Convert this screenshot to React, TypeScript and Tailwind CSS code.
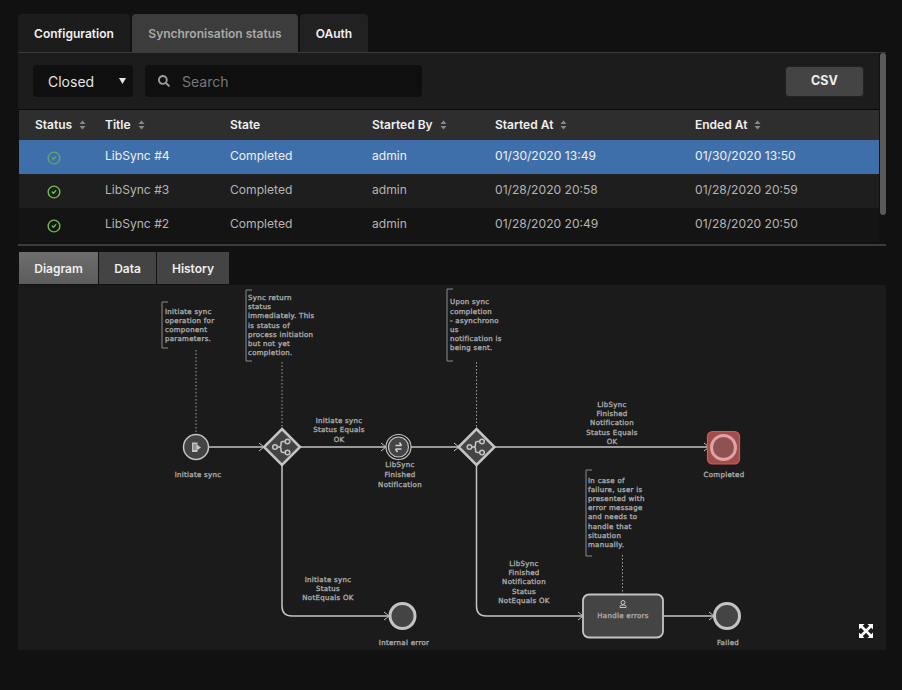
import { CircleCheck } from 'lucide-react';
import { FaSearch } from 'react-icons/fa';

const columns = ['Status', 'Title', 'State', 'Started By', 'Started At', 'Ended At'];
const sortable = [true, true, false, true, true, true];

const rows = [
  { title: 'LibSync #4', started: '01/30/2020 13:49', ended: '01/30/2020 13:50' },
  { title: 'LibSync #3', started: '01/28/2020 20:58', ended: '01/28/2020 20:59' },
  { title: 'LibSync #2', started: '01/28/2020 20:49', ended: '01/28/2020 20:50' },
];

const SortIcon = () => (
  <svg width="7" height="10" viewBox="0 0 7 10" className="fill-[#8a8a8a]">
    <path d="M3.5 0.5 L6.5 4 H0.5 Z M3.5 9.5 L0.5 6 H6.5 Z" />
  </svg>
);

// multi-line diagram text, anchor is start for notes and middle for labels
const DiagramText = ({ x, ys, lines, middle }: { x: number; ys: number[]; lines: string[]; middle?: boolean }) => (
  <g textAnchor={middle ? 'middle' : 'start'} stroke="#a8a8a8" strokeWidth="0.35">
    {lines.map((line, i) => (
      <text key={i} x={x} y={ys[i]}>
        {line}
      </text>
    ))}
  </g>
);

const Bracket = ({ x, y1, y2 }: { x: number; y1: number; y2: number }) => (
  <path d={`M${x + 6} ${y1} H${x} V${y2} H${x + 6}`} fill="none" stroke="#8c8c8c" strokeWidth="1" />
);

const Arrow = ({ x, y }: { x: number; y: number }) => (
  <path d={`M${x - 5} ${y - 4} L${x} ${y} L${x - 5} ${y + 4}`} fill="none" stroke="#c4c4c4" strokeWidth="1" />
);

const Gateway = ({ cx, cy }: { cx: number; cy: number }) => (
  <g>
    <path
      d={`M${cx} ${cy - 18} L${cx + 18} ${cy} L${cx} ${cy + 18} L${cx - 18} ${cy} Z`}
      fill="#444444"
      stroke="#c4c4c4"
      strokeWidth="2.5"
    />
    <g fill="none" stroke="#c4c4c4" strokeWidth="1.5">
      <circle cx={cx - 7} cy={cy} r="2.3" />
      <circle cx={cx + 5.5} cy={cy - 5.5} r="2.3" />
      <circle cx={cx + 5.5} cy={cy + 5.5} r="2.3" />
      <path d={`M${cx - 4.7} ${cy} H${cx - 3} Q${cx - 1} ${cy} ${cx - 1} ${cy - 2} V${cy - 3.5} Q${cx - 1} ${cy - 5.5} ${cx + 1} ${cy - 5.5} H${cx + 3.2}`} />
      <path d={`M${cx - 3} ${cy} Q${cx - 1} ${cy} ${cx - 1} ${cy + 2} V${cy + 3.5} Q${cx - 1} ${cy + 5.5} ${cx + 1} ${cy + 5.5} H${cx + 3.2}`} />
    </g>
  </g>
);

const Diagram = () => (
  <svg
    viewBox="18 285 868 365"
    width="868"
    height="365"
    className="block font-['DejaVu_Sans',sans-serif] text-[7px] tracking-[0.3px] fill-[#a8a8a8]"
  >
    {/* notes */}
    <Bracket x={162} y1={302} y2={348} />
    <DiagramText x={165} ys={[314, 323, 332, 341]} lines={['Initiate sync', 'operation for', 'component', 'parameters.']} />
    <Bracket x={246} y1={290} y2={361} />
    <DiagramText
      x={248}
      ys={[300, 309, 318, 328, 337, 346, 355]}
      lines={['Sync return', 'status', 'immediately. This', 'is status of', 'process initiation', 'but not yet', 'completion.']}
    />
    <Bracket x={447} y1={289} y2={361} />
    <DiagramText
      x={450}
      ys={[304, 314, 323, 332, 341, 350]}
      lines={['Upon sync', 'completion', '- asynchrono', 'us', 'notification is', 'being sent.']}
    />
    <Bracket x={586} y1={470} y2={556} />
    <DiagramText
      x={588}
      ys={[483, 492, 501, 510, 519, 529, 538, 547]}
      lines={['In case of', 'failure, user is', 'presented with', 'error message', 'and needs to', 'handle that', 'situation', 'manually.']}
    />

    {/* associations */}
    <g stroke="#a0a0a0" strokeWidth="1" strokeDasharray="1.5 2" fill="none">
      <path d="M196 350 V434" />
      <path d="M282 362 V428" />
      <path d="M476.5 362 V428" />
      <path d="M622.5 555 V594" />
    </g>

    {/* flows */}
    <g stroke="#c4c4c4" strokeWidth="1.5" fill="none">
      <path d="M208 447 H263" />
      <path d="M300 447 H385" />
      <path d="M411 447 H458" />
      <path d="M494 447 H708" />
      <path d="M282 465 V606 Q282 616 292 616 H388" />
      <path d="M476.5 465 V606 Q476.5 616 486 616 H582" />
      <path d="M663 616 H713" />
    </g>
    <Arrow x={264} y={447} />
    <Arrow x={386} y={447} />
    <Arrow x={459} y={447} />
    <Arrow x={709} y={447} />
    <Arrow x={389} y={616} />
    <Arrow x={583} y={616} />
    <Arrow x={714} y={616} />

    {/* start */}
    <circle cx="196" cy="447" r="12.5" fill="#444444" stroke="#c4c4c4" strokeWidth="1.5" />
    <path d="M192 442.5 H197.5 V445 L201 447.5 L197.5 450 V452 H192 Z" fill="#c4c4c4" />
    <path d="M193.2 445 H196.5 M193.2 447 H196.5 M193.2 449 H196.5" stroke="#444444" strokeWidth="0.8" />

    <Gateway cx={282} cy={447} />
    <Gateway cx={476.5} cy={447} />

    {/* intermediate */}
    <circle cx="398.5" cy="447" r="12.5" fill="#1b1b1b" stroke="#c4c4c4" strokeWidth="1.2" />
    <circle cx="398.5" cy="447" r="10" fill="#444444" stroke="#c4c4c4" strokeWidth="1.2" />
    <path d="M395.5 445.5 H401.5 M399.5 442.5 L401.5 445.5 M401.5 449 H395.5 M397.5 452 L395.5 449" stroke="#d0d0d0" strokeWidth="1.5" fill="none" />

    {/* completed */}
    <rect x="707.5" y="431.5" width="32" height="32.5" rx="5" fill="#a24c4c" stroke="#d4585a" strokeWidth="1.2" />
    <circle cx="723.5" cy="447.5" r="12" fill="#8e5252" stroke="#dfa3a3" strokeWidth="3" />

    {/* task */}
    <rect x="583" y="594.5" width="80" height="43" rx="6" fill="#444444" stroke="#c4c4c4" strokeWidth="1.8" />
    <circle cx="623" cy="602.5" r="2" fill="none" stroke="#c4c4c4" strokeWidth="1" />
    <path d="M620 607.5 V606.5 Q620 605 622 605 H624 Q626 605 626 606.5 V607.5 Z" fill="none" stroke="#c4c4c4" strokeWidth="1" />

    {/* end events */}
    <circle cx="402.5" cy="616" r="12.5" fill="#444444" stroke="#c4c4c4" strokeWidth="3" />
    <circle cx="727" cy="616" r="12.5" fill="#444444" stroke="#c4c4c4" strokeWidth="3" />

    {/* labels */}
    <DiagramText middle x={198} ys={[477]} lines={['Initiate sync']} />
    <DiagramText middle x={339} ys={[423, 432, 442]} lines={['Initiate sync', 'Status Equals', 'OK']} />
    <DiagramText middle x={400} ys={[467, 477, 487]} lines={['LibSync', 'Finished', 'Notification']} />
    <DiagramText
      middle
      x={612}
      ys={[407, 416, 425, 435, 444]}
      lines={['LibSync', 'Finished', 'Notification', 'Status Equals', 'OK']}
    />
    <DiagramText middle x={724} ys={[477]} lines={['Completed']} />
    <DiagramText middle x={328} ys={[582, 591, 600]} lines={['Initiate sync', 'Status', 'NotEquals OK']} />
    <DiagramText middle x={524} ys={[566, 575, 584, 594, 603]} lines={['LibSync', 'Finished', 'Notification', 'Status', 'NotEquals OK']} />
    <DiagramText middle x={404} ys={[645]} lines={['Internal error']} />
    <DiagramText middle x={623} ys={[618]} lines={['Handle errors']} />
    <DiagramText middle x={728} ys={[645]} lines={['Failed']} />
  </svg>
);

const ExpandIcon = () => (
  <svg width="14" height="14" viewBox="0 0 14 14" className="absolute bottom-[12px] right-[13px] fill-white stroke-white">
    <path d="M0 0 H5.5 L0 5.5 Z M14 0 V5.5 L8.5 0 Z M14 14 H8.5 L14 8.5 Z M0 14 V8.5 L5.5 14 Z" strokeWidth="0" />
    <path d="M2 2 L12 12 M12 2 L2 12" strokeWidth="2.6" />
  </svg>
);

export default function App() {
  return (
    <div className="min-h-[690px] bg-[#111111] pl-[18px] pr-4 pt-[14px] font-['Inter',sans-serif]">
      {/* Top tabs */}
      <div className="flex h-[38px] gap-[2px] text-[12px] font-semibold">
        <div className="flex w-[112px] items-center justify-center rounded-t bg-[#1c1c1c] pt-px text-[#f0f0f0]">Configuration</div>
        <div className="flex w-[166px] items-center justify-center rounded-t bg-[#3c3c3c] pt-px text-[#a9a9a9]">Synchronisation status</div>
        <div className="flex w-[68px] items-center justify-center rounded-t bg-[#212121] pt-px text-[#f0f0f0]">OAuth</div>
      </div>

      {/* Table panel */}
      <div className="relative h-[192px] w-[868px] border-t border-[#3a3a3a]">
        <div className="mr-[7px]">
          <div className="flex h-[56px] items-center bg-[#1c1c1c] px-[15px]">
            <div className="flex h-[32px] w-[100px] items-center justify-between rounded bg-[#0f0f0f] pl-[15px] pr-[7px] text-[14px] text-[#e4e4e4]">
              <span className="pt-px">Closed</span>
              <svg width="7" height="6" viewBox="0 0 7 6" className="fill-[#e4e4e4]">
                <path d="M0 0 H7 L3.5 6 Z" />
              </svg>
            </div>
            <div className="ml-3 flex h-[32px] w-[277px] items-center rounded bg-[#0f0f0f] pl-[13px] text-[14px] text-[#777777]">
              <FaSearch size={12} className="text-[#999999]" />
              <span className="ml-[12px]">Search</span>
            </div>
            <button className="ml-auto h-[31px] w-[79px] rounded border border-[#222222] bg-[#444444] text-[12.5px] font-bold text-[#eeeeee]">
              CSV
            </button>
          </div>

          <div className="ml-px border-t border-[#0a0a0a]">
            <div className="grid h-[30px] grid-cols-[70px_125px_142px_123px_200px_1fr] items-center bg-[#2e2e2e] pl-4 text-[12px] font-semibold text-[#f0f0f0]">
              {columns.map((col, i) => (
                <div key={col} className="flex items-center gap-[7px]">
                  {col}
                  {sortable[i] && <SortIcon />}
                </div>
              ))}
            </div>
            {rows.map((row, i) => (
              <div
                key={row.title}
                className={`grid h-[34px] grid-cols-[70px_125px_142px_123px_200px_1fr] items-center pb-px pl-4 text-[12.1px] ${
                  i === 0 ? 'bg-[#3f6fab] text-[#f0f0f0]' : i === 1 ? 'bg-[#1e1e1e] text-[#b4b4b4]' : 'bg-[#141414] text-[#b4b4b4]'
                }`}
              >
                <div className="pl-[12px] pt-[2px]">
                  <CircleCheck size={14} strokeWidth={2.4} className={i === 0 ? 'text-[#6cc04a]/70' : 'text-[#6cc04a]'} />
                </div>
                <div>{row.title}</div>
                <div>Completed</div>
                <div>admin</div>
                <div>{row.started}</div>
                <div>{row.ended}</div>
              </div>
            ))}
          </div>
        </div>
        {/* scrollbar */}
        <div className="absolute right-0 top-0 h-[162px] w-[6px] rounded bg-[#5a5a5a]" />
      </div>

      <div className="h-[2px] w-[868px] bg-[#3c3c3c]" />

      {/* Bottom tabs */}
      <div className="ml-px mt-[6px] flex h-[32px] gap-px text-[12px] font-semibold text-[#eeeeee]">
        <div className="flex w-[79px] items-center justify-center bg-gradient-to-b from-[#6e6e6e] to-[#5c5c5c] pt-px">Diagram</div>
        <div className="flex w-[57px] items-center justify-center bg-[#444444] pt-px">Data</div>
        <div className="flex w-[72px] items-center justify-center bg-[#444444] pt-px">History</div>
      </div>

      <div className="relative mt-px w-[868px] bg-[#1b1b1b]">
        <Diagram />
        <ExpandIcon />
      </div>
    </div>
  );
}
